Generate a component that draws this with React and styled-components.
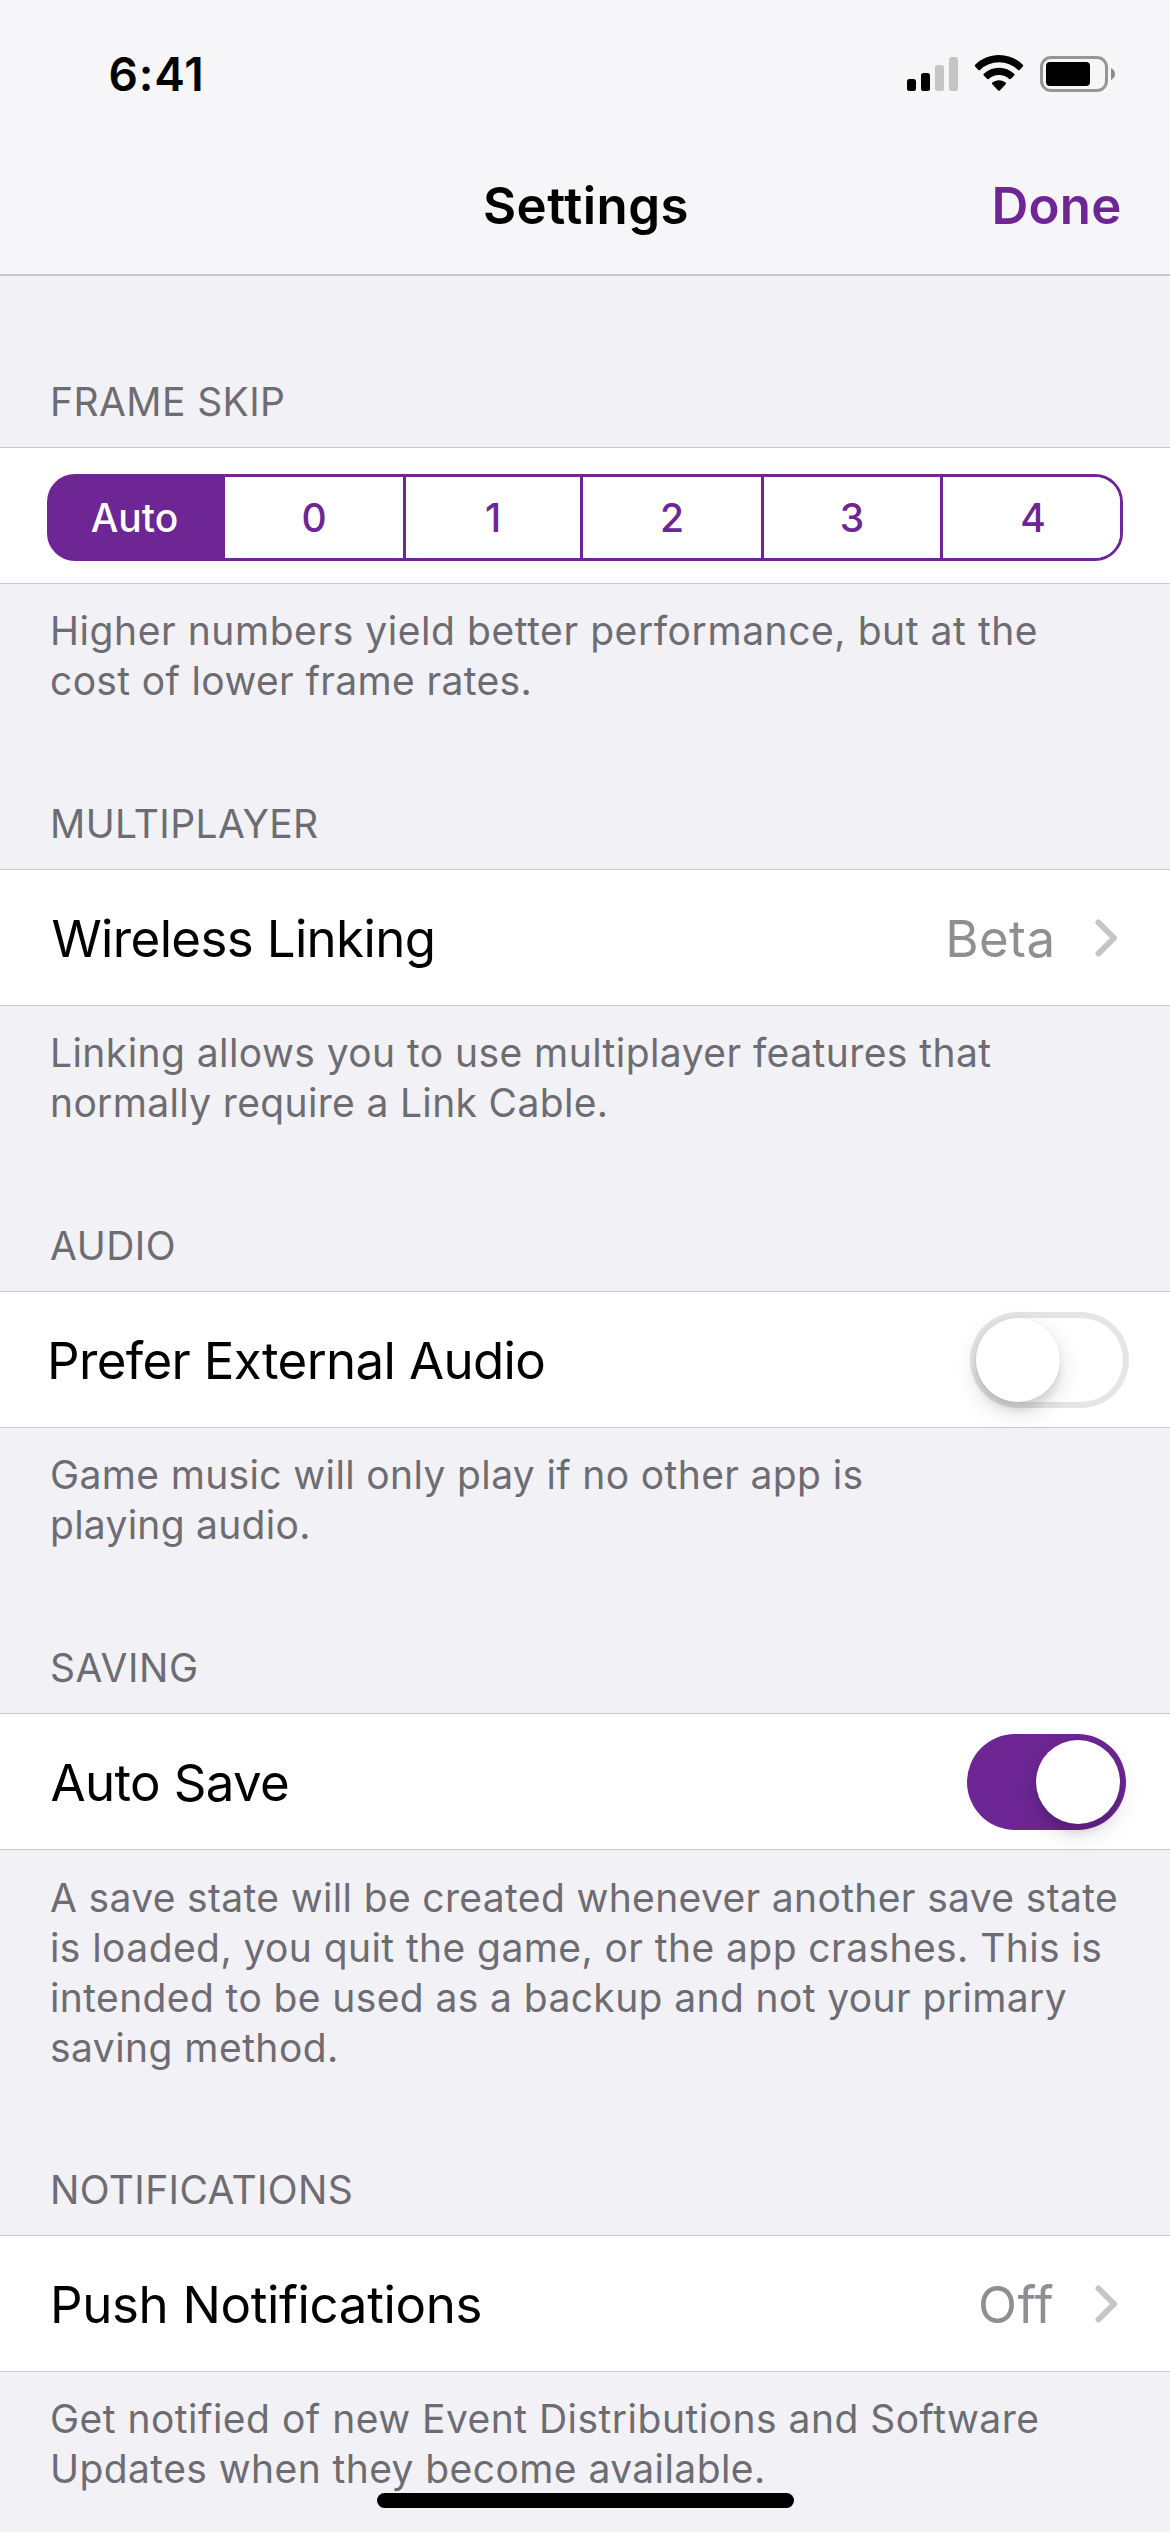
import React from "react";
import styled, { createGlobalStyle } from "styled-components";

const purple = "#6d2694";

const GlobalStyle = createGlobalStyle`
  *, *::before, *::after { box-sizing: border-box; }
  body {
    margin: 0;
    background: #f2f1f6;
    font-family: Inter, Roboto, "Liberation Sans", sans-serif;
    color: #000;
  }
`;

const Screen = styled.div`
  position: relative;
  width: 1170px;
  height: 2532px;
  overflow: hidden;
  background: #f2f1f6;
`;

const Header = styled.header`
  height: 276px;
  background: #f6f6f8;
  border-bottom: 2px solid #c9c8cc;
`;

const StatusBar = styled.div`
  display: flex;
  justify-content: space-between;
  align-items: center;
  height: 141px;
  padding: 7px 54px 0 108.5px;
`;

const Time = styled.div`
  font-size: 46px;
  font-weight: 600;
  line-height: 56px;
  letter-spacing: 0.8px;
`;

const StatusIcons = styled.svg`
  display: block;
  width: 209px;
  height: 38px;
`;

const NavBar = styled.nav`
  display: grid;
  grid-template-columns: 1fr auto 1fr;
  align-items: center;
  height: 130px;
  padding: 0 48.5px;
`;

const NavTitle = styled.h1`
  grid-column: 2;
  margin: 0;
  padding-left: 2px;
  font-size: 51px;
  font-weight: 600;
  line-height: 60px;
  letter-spacing: 0.5px;
`;

const NavButton = styled.button`
  justify-self: end;
  padding: 0;
  border: 0;
  background: none;
  color: ${purple};
  font: 600 51px/60px Inter, sans-serif;
  letter-spacing: 0.2px;
`;

const List = styled.main`
  display: flex;
  flex-direction: column;
  padding-top: 8px;
`;

const SectionTitle = styled.h2`
  margin: 0;
  padding: 93px 50px 20px;
  color: #6d6c72;
  font-size: 39px;
  font-weight: 400;
  line-height: 50px;
  letter-spacing: ${(p) => p.$track}px;
`;

const SectionNote = styled.p`
  margin: 0 0 ${(p) => -p.$drop}px;
  padding: ${(p) => 22 + p.$drop}px 0 0 50px;
  color: #6d6c72;
  font-size: 39px;
  line-height: 50px;
  white-space: nowrap;
`;

const NoteLine = styled.span`
  display: block;
  letter-spacing: ${(p) => p.$track}px;
`;

const Row = styled.div`
  display: flex;
  align-items: center;
  height: 137px;
  padding: 0 ${(p) => p.$right}px 0 ${(p) => p.$left}px;
  background: #fff;
  border-top: 1px solid #c8c7cc;
  border-bottom: 1px solid #c8c7cc;
`;

const RowLabel = styled.span`
  flex: 1;
  padding-top: 3px;
  font-size: 51px;
  line-height: 60px;
  letter-spacing: ${(p) => p.$track}px;
`;

const RowValue = styled.span`
  padding-top: 3px;
  margin-right: ${(p) => p.$gap}px;
  color: #8e8e93;
  font-size: 51px;
  line-height: 60px;
  letter-spacing: 0.4px;
`;

const Chevron = styled.svg`
  display: block;
  width: 24px;
  height: 38px;
`;

const Segments = styled.div`
  display: flex;
  width: 1076px;
  height: 87px;
  margin-top: 4px;
  border: 3px solid ${purple};
  border-radius: 28px;
  background: linear-gradient(to right, ${purple} 50%, #fff 50%);
  overflow: hidden;
`;

const Segment = styled.button`
  width: ${(p) => p.$width}px;
  padding: 0;
  border: 0;
  border-right: ${(p) => (p.$last ? 0 : 3)}px solid ${purple};
  background: ${(p) => (p.$active ? purple : "#fff")};
  color: ${(p) => (p.$active ? "#fff" : purple)};
  font: 450 39px/80px Inter, sans-serif;
  text-indent: ${(p) => (p.$last ? 3 : p.$active ? -3 : 0)}px;
`;

const Switch = styled.div`
  display: flex;
  align-items: center;
  justify-content: ${(p) => (p.$on ? "flex-end" : "flex-start")};
  width: 159px;
  height: 96px;
  margin-top: 1px;
  padding: 0 6px;
  border-radius: 48px;
  background: ${(p) => (p.$on ? purple : "#fff")};
  box-shadow: ${(p) => (p.$on ? "none" : "inset 0 0 0 6px #e5e5e5")};
`;

const Knob = styled.div`
  width: 84px;
  height: 84px;
  border-radius: 50%;
  background: #fff;
  box-shadow: 0 9px 24px rgba(0, 0, 0, 0.15), 0 9px 6px rgba(0, 0, 0, 0.07), 0 0 0 1px rgba(0, 0, 0, 0.03);
`;

const HomeIndicator = styled.div`
  position: absolute;
  left: 377px;
  top: 2493px;
  width: 417px;
  height: 15px;
  border-radius: 8px;
  background: #000;
`;

const segments = [
  ["Auto", 175],
  ["0", 181],
  ["1", 177],
  ["2", 181],
  ["3", 179],
  ["4", 177],
];

function Section({ title, track, lines, drop = 0, children }) {
  return (
    <section>
      <SectionTitle $track={track}>{title}</SectionTitle>
      {children}
      <SectionNote $drop={drop}>
        {lines.map(([text, t]) => (
          <NoteLine key={text} $track={t}>{text}</NoteLine>
        ))}
      </SectionNote>
    </section>
  );
}

function Disclosure() {
  return (
    <Chevron viewBox="0 0 24 38" fill="none">
      <path d="M4.500 3.500 L20 19 L4.500 34.500" stroke="#c5c5c8" strokeWidth="6" strokeLinecap="round" strokeLinejoin="round" />
    </Chevron>
  );
}

export default function App() {
  return (
    <Screen>
      <GlobalStyle />
      <Header>
        <StatusBar>
          <Time>6:41</Time>
          <StatusIcons viewBox="0 0 209 38">
            <rect x="0" y="24" width="9" height="12" rx="2.5" />
            <rect x="14" y="18" width="9" height="18" rx="2.5" />
            <rect x="28" y="10" width="9" height="26" rx="2.5" fill="#c5c5c6" />
            <rect x="42" y="2" width="9" height="34" rx="2.5" fill="#c5c5c6" />
            <path d="M92 0 C101 0 109.500 3.500 115.800 9.700 Q116.700 10.600 115.800 11.500 L112.700 14.900 Q111.900 15.700 111 14.900 A27.500 27.500 0 0 0 73 14.900 Q72.100 15.700 71.300 14.900 L68.200 11.500 Q67.300 10.600 68.200 9.700 C74.500 3.500 83 0 92 0 Z" />
            <path d="M92 12.800 C97.800 12.800 103 15 107.200 18.800 Q108.100 19.600 107.200 20.500 L104 23.800 Q103.200 24.600 102.300 23.900 A15.500 15.500 0 0 0 81.700 23.900 Q80.800 24.600 80 23.800 L76.800 20.500 Q75.900 19.600 76.800 18.800 C81 15 86.200 12.800 92 12.800 Z" />
            <path d="M92 25.200 C94.500 25.200 96.900 26.100 98.700 27.600 Q99.500 28.400 98.700 29.200 L92.800 35.400 Q92 36.200 91.200 35.400 L85.300 29.200 Q84.500 28.400 85.300 27.600 C87.100 26.100 89.500 25.200 92 25.200 Z" />
            <rect x="134.500" y="2.500" width="65" height="33" rx="9.500" fill="none" stroke="#969697" strokeWidth="3" />
            <rect x="139" y="7" width="44" height="24" rx="4" />
            <path d="M204 13 Q208 15.300 208 19 Q208 22.700 204 25 Z" fill="#8b8b8c" />
          </StatusIcons>
        </StatusBar>
        <NavBar>
          <NavTitle>Settings</NavTitle>
          <NavButton>Done</NavButton>
        </NavBar>
      </Header>
      <List>
        <Section
          title="FRAME SKIP"
          track={0.41}
          lines={[
            ["Higher numbers yield better performance, but at the", 0.56],
            ["cost of lower frame rates.", 0.35],
          ]}
        >
          <Row $left={47} $right={47}>
            <Segments>
              {segments.map(([text, width], i) => (
                <Segment key={text} $width={width} $active={i === 0} $last={i === segments.length - 1}>
                  {text}
                </Segment>
              ))}
            </Segments>
          </Row>
        </Section>
        <Section
          title="MULTIPLAYER"
          track={0.4}
          lines={[
            ["Linking allows you to use multiplayer features that", 0.43],
            ["normally require a Link Cable.", 0.34],
          ]}
        >
          <Row $left={51.5} $right={52}>
            <RowLabel $track={-0.64}>Wireless Linking</RowLabel>
            <RowValue $gap={38.5}>Beta</RowValue>
            <Disclosure />
          </Row>
        </Section>
        <Section
          title="AUDIO"
          track={0.5}
          lines={[
            ["Game music will only play if no other app is", 0.36],
            ["playing audio.", 0.27],
          ]}
        >
          <Row $left={47} $right={41}>
            <RowLabel $track={-0.64}>Prefer External Audio</RowLabel>
            <Switch><Knob /></Switch>
          </Row>
        </Section>
        <Section
          title="SAVING"
          track={0.6}
          drop={1}
          lines={[
            ["A save state will be created whenever another save state", 0.35],
            ["is loaded, you quit the game, or the app crashes. This is", 0.42],
            ["intended to be used as a backup and not your primary", 0.39],
            ["saving method.", 0.45],
          ]}
        >
          <Row $left={50.5} $right={44}>
            <RowLabel $track={-0.65}>Auto Save</RowLabel>
            <Switch $on><Knob /></Switch>
          </Row>
        </Section>
        <Section
          title="NOTIFICATIONS"
          track={0.37}
          lines={[
            ["Get notified of new Event Distributions and Software", 0.48],
            ["Updates when they become available.", 0.42],
          ]}
        >
          <Row $left={50} $right={52}>
            <RowLabel $track={-0.35}>Push Notifications</RowLabel>
            <RowValue $gap={40}>Off</RowValue>
            <Disclosure />
          </Row>
        </Section>
      </List>
      <HomeIndicator />
    </Screen>
  );
}
